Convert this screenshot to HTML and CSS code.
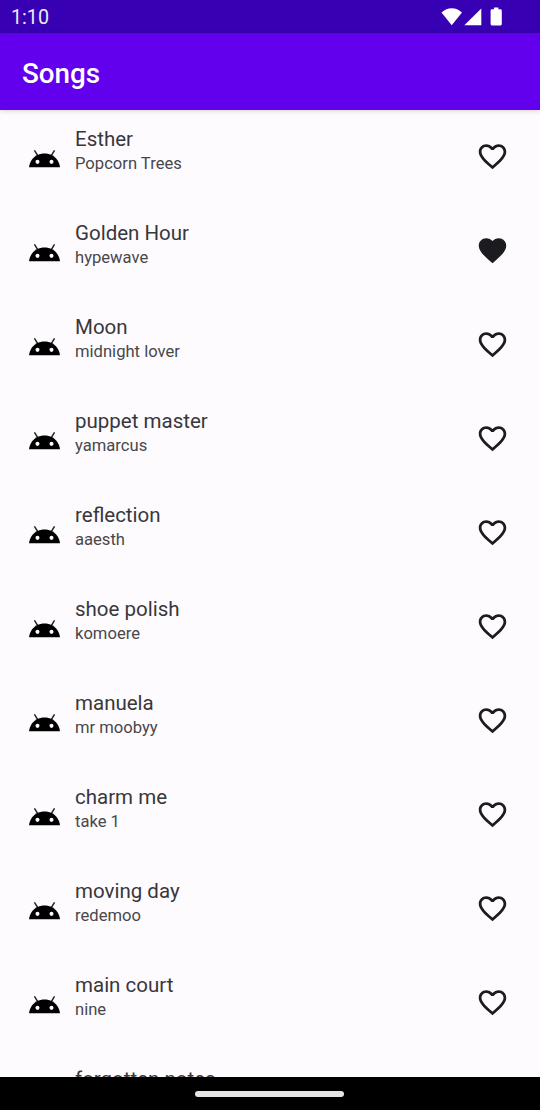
FILE: index.html
```
<!DOCTYPE html>
<html lang="en">
<head>
<meta charset="utf-8">
<title>Songs</title>
<link rel="stylesheet" href="styles.css">
</head>
<body>
<svg class="sprite" aria-hidden="true">
  <symbol id="android" viewBox="31 38 46 25.93">
    <path class="antenna" d="M39.6 39.2l5 8.4M68.4 39.2l-5 8.4"/>
    <path d="M65.3,45.828C58.5 42.1 49.5 42.1 42.7 45.828C36.2,49.428 31.7,56.028 31,63.928h46C76.3,56.028 71.8,49.428 65.3,45.828z"/>
    <circle class="eye" cx="43.6" cy="55.6" r="3"/>
    <circle class="eye" cx="64.4" cy="55.6" r="3"/>
  </symbol>
  <symbol id="heart" viewBox="0 0 24 24">
    <path d="M16.5 3c-1.74 0-3.41.81-4.5 2.09C10.91 3.81 9.24 3 7.5 3 4.42 3 2 5.42 2 8.5c0 3.78 3.4 6.86 8.55 11.54L12 21.35l1.45-1.32C18.6 15.36 22 12.28 22 8.5 22 5.42 19.58 3 16.5 3zm-4.4 15.55l-.1.1-.1-.1C7.14 14.24 4 11.39 4 8.5 4 6.5 5.5 5 7.5 5c1.54 0 3.04.99 3.57 2.36h1.87C13.46 5.99 14.96 5 16.5 5c2 0 3.5 1.5 3.5 3.5 0 2.89-3.14 5.74-7.9 10.05z"/>
  </symbol>
  <symbol id="heart-filled" viewBox="0 0 24 24">
    <path d="M12 21.35l-1.45-1.32C5.4 15.36 2 12.28 2 8.5 2 5.42 4.42 3 7.5 3c1.74 0 3.41.81 4.5 2.09C13.09 3.81 14.76 3 16.5 3 19.58 3 22 5.42 22 8.5c0 3.78-3.4 6.86-8.55 11.54L12 21.35z"/>
  </symbol>
</svg>
<div class="screen">
  <header class="status">
    <span class="clock">1:10</span>
    <svg class="status-icons" width="62" height="20" viewBox="0 0 62 20">
      <path d="M10.7 18.2 .5 5.6Q5 1.2 10.7 1.2T21 5.6z"/>
      <path d="M40.3 1.4v16.8H23.3z"/>
      <path d="M53 .5h4.4v1.8h2.2q1.2 0 1.2 1.2v13.6q0 1.3-1.2 1.3h-8.8q-1.2 0-1.2-1.3V3.5q0-1.2 1.2-1.2h2.2z"/>
    </svg>
  </header>
  <div class="appbar"><h1 class="heading">Songs</h1></div>
  <ul class="songs" id="songs"></ul>
  <footer class="nav"><div class="handle"></div></footer>
</div>
<script src="songs.js"></script>
</body>
</html>
```
FILE: styles.css
```
body {
  margin: 0;
  font-family: Roboto, "Liberation Sans", sans-serif;
}

.sprite {
  position: absolute;
  width: 0;
  height: 0;
}

.screen {
  display: flex;
  flex-direction: column;
  width: 540px;
  height: 1110px;
  overflow: hidden;
  background: #fefbff;
}

.status {
  display: flex;
  justify-content: space-between;
  align-items: center;
  flex: none;
  box-sizing: border-box;
  height: 33px;
  padding: 0 37px 0 11px;
  background: #3700b3;
  color: #eee8f8;
}

.clock {
  font-size: 19.7px;
  line-height: 24px;
  padding-top: 2px;
}

.status-icons {
  fill: #fff;
}

.appbar {
  display: flex;
  align-items: center;
  flex: none;
  z-index: 1;
  height: 77px;
  padding-left: 22px;
  background: #6200ee;
  box-shadow: 0 1px 5px rgba(0, 0, 0, 0.16);
}

.heading {
  margin: 0;
  padding-top: 4px;
  color: #fff;
  font-size: 27.8px;
  line-height: 32px;
  font-weight: 500;
}

.songs {
  flex: 1;
  min-height: 0;
  margin: 0;
  padding: 0;
  overflow: hidden;
  list-style: none;
}

.song {
  display: flex;
  align-items: flex-start;
  height: 94px;
  padding: 0 30.7px 0 29px;
}

.avatar {
  width: 31px;
  height: 17.5px;
  margin-top: 40.2px;
}

.antenna {
  fill: none;
  stroke: #222;
  stroke-width: 2.2;
  stroke-linecap: round;
}

.eye {
  fill: #fefbff;
}

.info {
  flex: 1;
  margin-left: 15px;
  padding-top: 17px;
}

.title {
  color: #38373b;
  font-size: 20.5px;
  line-height: 25px;
}

.artist {
  color: #48474b;
  font-size: 16.6px;
  line-height: 24px;
}

.like {
  width: 33px;
  height: 33px;
  margin-top: 30.3px;
  fill: #1c1b1f;
}

.nav {
  display: flex;
  justify-content: center;
  align-items: center;
  flex: none;
  box-sizing: border-box;
  height: 33px;
  padding-right: 1px;
  background: #000;
}

.handle {
  width: 149px;
  height: 6px;
  border-radius: 3px;
  background: #e6e4e7;
}
```
FILE: songs.js
```
const songs = [
  ["Esther", "Popcorn Trees"],
  ["Golden Hour", "hypewave", true],
  ["Moon", "midnight lover"],
  ["puppet master", "yamarcus"],
  ["reflection", "aaesth"],
  ["shoe polish", "komoere"],
  ["manuela", "mr moobyy"],
  ["charm me", "take 1"],
  ["moving day", "redemoo"],
  ["main court", "nine"],
  ["forgotten notes", ""]
];

document.getElementById("songs").innerHTML = songs.map(([title, artist, liked]) => `
  <li class="song">
    <svg class="avatar"><use href="#android"/></svg>
    <div class="info">
      <div class="title">${title}</div>
      <div class="artist">${artist}</div>
    </div>
    <svg class="like"><use href="#${liked ? "heart-filled" : "heart"}"/></svg>
  </li>`).join("");
```
